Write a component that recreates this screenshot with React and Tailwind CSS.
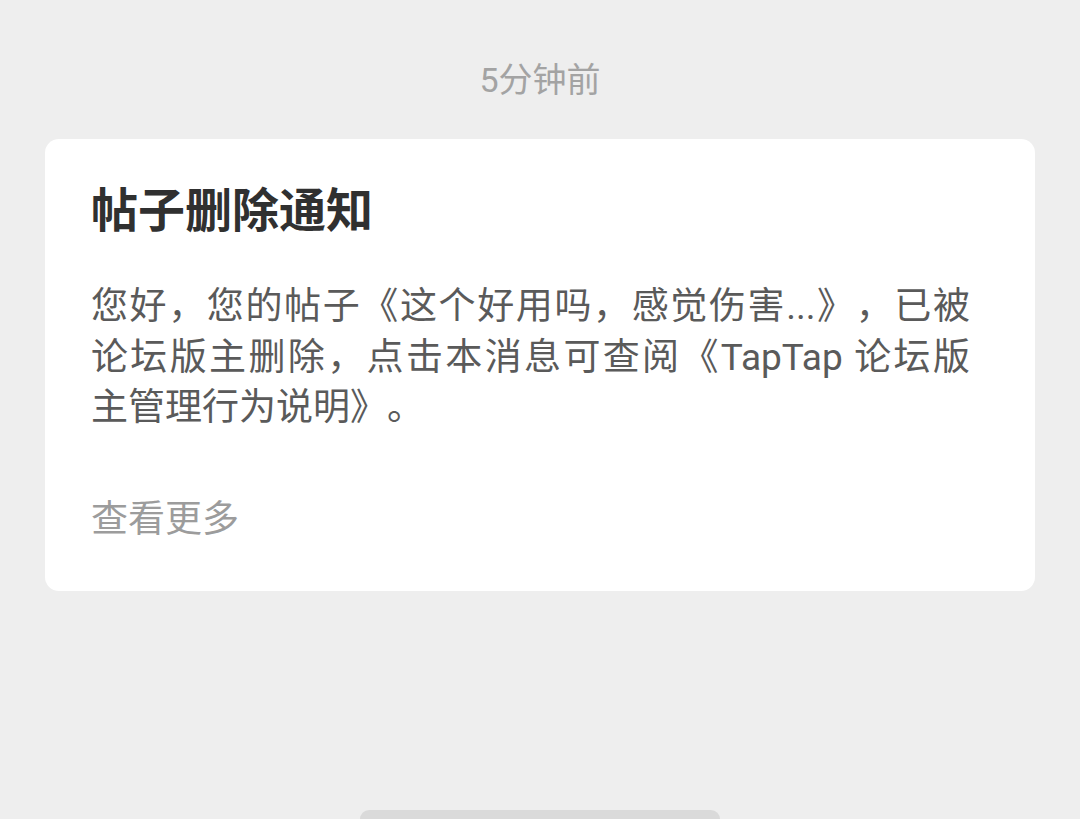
function NoticeCard() {
  return (
    <div className="mt-[35px] mx-[45px] bg-white rounded-[14px] pt-[44px] pb-[46px] pl-[46px] pr-[65px]">
      <h2 className="text-[47px] leading-[56px] font-semibold text-[#303030]">
        帖子删除通知
      </h2>

      {/* body text: first two lines are justified like on the phone */}
      <p className="mt-[43px] text-[37px] leading-[50.5px] text-[#5a5a5a]">
        <span className="block text-justify [text-align-last:justify]">
          您好，您的帖子《这个好用吗，感觉伤害...》，已被
        </span>
        <span className="block text-justify [text-align-last:justify]">
          论坛版主删除，点击本消息可查阅《TapTap 论坛版
        </span>
        <span className="block">主管理行为说明》。</span>
      </p>

      <div className="mt-[61px] text-[37px] leading-[50px] text-[#9c9c9c]">
        查看更多
      </div>
    </div>
  );
}

export default function App() {
  return (
    <div
      className="flex flex-col h-[819px] overflow-hidden bg-[#eeeeee] [text-spacing-trim:space-all]"
      style={{ fontFamily: 'Roboto, "Noto Sans CJK SC", sans-serif' }}
    >
      <div className="pt-[56px] text-center text-[34px] leading-[48px] text-[#a3a3a3]">
        5分钟前
      </div>

      <NoticeCard />

      <div className="flex-1" />

      {/* home indicator */}
      <div className="flex justify-center h-[9px] overflow-hidden">
        <div className="w-[360px] h-[18px] rounded-full bg-[#dadada]" />
      </div>
    </div>
  );
}
